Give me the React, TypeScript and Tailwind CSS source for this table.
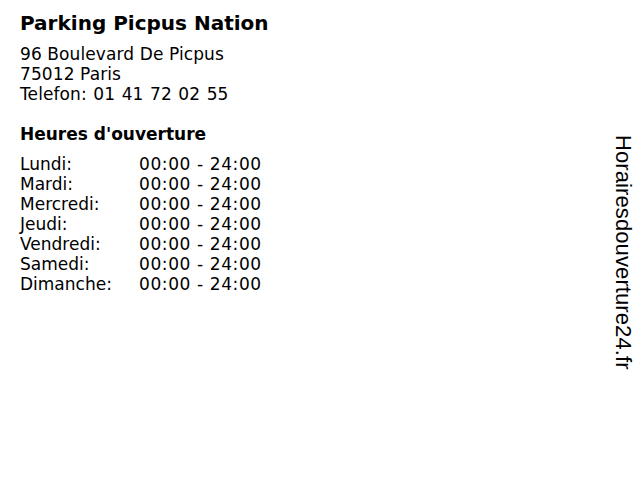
export default function App() {
  const hours = [
    ["Lundi:", "00:00 - 24:00"],
    ["Mardi:", "00:00 - 24:00"],
    ["Mercredi:", "00:00 - 24:00"],
    ["Jeudi:", "00:00 - 24:00"],
    ["Vendredi:", "00:00 - 24:00"],
    ["Samedi:", "00:00 - 24:00"],
    ["Dimanche:", "00:00 - 24:00"],
  ];
  return (
    <div className="w-[640px] h-[480px] bg-white flex text-black font-['DejaVu_Sans',sans-serif]">
      <div className="flex-1 pl-5 pt-[10px]">
        <h1 className="text-[20px] font-bold leading-[26px]">Parking Picpus Nation</h1>
        <div className="mt-[8px] text-[17px] leading-[20px] tracking-[0.1px]">
          <div>96 Boulevard De Picpus</div>
          <div>75012 Paris</div>
          <div className="[word-spacing:1px]">Telefon: 01 41 72 02 55</div>
        </div>
        <h2 className="mt-[20px] text-[17px] font-bold leading-[20px]">Heures d'ouverture</h2>
        <div className="mt-[10px] text-[17px] leading-[20px]">
          {hours.map(([d, h]) => (
            <div key={d} className="flex">
              <div className="w-[119px]">{d}</div>
              <div className="tracking-[0.6px]">{h}</div>
            </div>
          ))}
        </div>
      </div>
      <div className="w-[40px] pt-[135px] flex justify-end pr-[5px]">
        <div className="[writing-mode:vertical-rl] text-[22px] leading-[24px] tracking-[0.1px] font-['Liberation_Sans',Arial,sans-serif]">
          Horairesdouverture24.fr
        </div>
      </div>
    </div>
  );
}
